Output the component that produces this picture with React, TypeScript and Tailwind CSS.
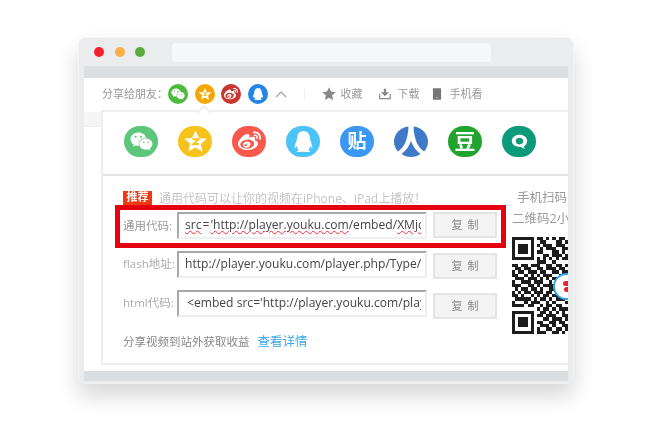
import { FaQq, FaWeibo, FaWeixin } from "react-icons/fa";
import { RiDownload2Fill, RiSmartphoneFill, RiStarFill } from "react-icons/ri";

const qrRows = [
  "111111101101010110",
  "100000100110001101",
  "101110101011101110",
  "101110100101110011",
  "101110101100011010",
  "100000100011011101",
  "111111101010101011",
  "000000001110010000",
  "110110111001101101",
  "011011001101110110",
  "101101110110011011",
  "110010101011100110",
  "011101110101011101",
  "100111011100101110",
  "111001101011110011",
  "010110110100111101",
  "101011011101100110",
  "110100101011011011",
  "011111010110101110",
  "100010111001010001",
  "111101100101101100",
  "000000001011010111",
  "111111100110101010",
  "100000101101110011",
  "101110100011011101",
  "101110101100110110",
  "101110100111010011",
  "100000101001101101",
  "111111101110011010",
];

function StarIcon({ size }: { size: number }) {
  return (
    <svg width={size} height={size} viewBox="0 0 24 24" aria-hidden>
      <path
        d="M12 1.5l3.2 6.9 7.6.9-5.6 5.1 1.5 7.5L12 17.8l-6.7 3.6 1.5-7.5L1.200 9.300l7.600-.9z"
        fill="#fff"
      />
      <path d="M9 9.800h6l-5 4.600h5.400" fill="none" stroke="#f8c21c" strokeWidth="1.800" />
    </svg>
  );
}

function RenrenLogo() {
  return (
    <svg width="34" height="31" viewBox="0 0 34 31" aria-hidden>
      <path d="M14.500 0.500C6 1.500 0 8 0 15.500c0 4 1.500 7.500 4 10 6-4 10-12 10.500-25z" fill="#3f7ac8" />
      <path d="M19.500 0.500C28 1.500 34 8 34 15.500c0 4-1.500 7.500-4 10-6-4-10-12-10.500-25z" fill="#3f7ac8" />
      <path d="M17 15c1.800 5 4.500 9 9.500 13-2.600 1.900-6 3-9.500 3s-6.900-1.100-9.500-3c5-4 7.700-8 9.500-13z" fill="#3f7ac8" />
    </svg>
  );
}

function Big({ className, children }: { className: string; children: React.ReactNode }) {
  return (
    <div className={`flex h-[31px] w-[34px] items-center justify-center rounded-full text-white ${className}`}>
      {children}
    </div>
  );
}

function Small({ className, children }: { className: string; children: React.ReactNode }) {
  return (
    <div className={`flex h-5 w-5 items-center justify-center rounded-full text-white ${className}`}>
      {children}
    </div>
  );
}

function CopyButton({ className }: { className: string }) {
  return (
    <div className={`flex h-[26px] w-16 items-center justify-center gap-[5px] border-2 border-[#e4e4e4] bg-[#f3f3f3] text-[11px] text-[#888] ${className}`}>
      <span>复</span>
      <span>制</span>
    </div>
  );
}

function CodeInput({ children }: { children: React.ReactNode }) {
  return (
    <div className="flex h-[27px] w-[250px] items-center overflow-hidden whitespace-nowrap border-2 border-t-[#a8a8a8] border-l-[#a8a8a8] border-r-[#eeeeee] border-b-[#eeeeee] bg-white pl-1.5 pr-1 text-[12.100px] text-[#444]">
      <div className="w-[238px] overflow-hidden">{children}</div>
    </div>
  );
}

function QrCode() {
  return (
    <div className="relative mt-[11px] h-[97px] w-14 overflow-hidden">
      <svg width="56" height="97" viewBox="0 0 18 29" preserveAspectRatio="none" shapeRendering="crispEdges" aria-hidden>
        {qrRows.map((row, y) =>
          row.split("").map((c, x) =>
            c === "1" ? <rect key={`${x}-${y}`} x={x} y={y} width="1" height="1" fill="#1d1d1d" /> : null,
          ),
        )}
      </svg>
      <div className="absolute left-[41px] top-[36px] flex h-[27px] w-[27px] flex-col items-center justify-center gap-px rounded-full border-2 border-[#2ea7f0] bg-white">
        <div className="ml-1 h-[5px] w-3 rounded-full bg-[#e8232c]" />
        <div className="ml-1 h-[5px] w-2.5 rounded-full bg-[#e8232c]" />
      </div>
    </div>
  );
}

export default function App() {
  return (
    <div className="h-[430px] w-[660px] overflow-hidden bg-white pl-[78px] pt-[37px] font-['Open_Sans','Noto_Sans_CJK_SC',sans-serif] blur-[0.5px]">
      <div className="flex h-[347px] w-[496px] flex-col rounded-lg border border-[#f4f4f5] bg-[#ebecee] px-[5px] pb-[2px] shadow-[0_12px_22px_rgba(0,0,0,0.16)]">
        {/* title bar */}
        <div className="flex h-7 shrink-0 items-center">
          <div className="ml-[10px] h-2.5 w-2.5 rounded-full bg-[#f5222d]" />
          <div className="ml-[11px] h-2.5 w-2.5 rounded-full bg-[#f7b04a]" />
          <div className="ml-[10px] h-2.5 w-2.5 rounded-full bg-[#5ca93e]" />
          <div className="ml-[27px] h-[19px] w-[319px] rounded-sm bg-[#f6f7f8]" />
        </div>

        <div className="flex flex-1 flex-col bg-[#dcdfe2] pb-[10px] pt-3">
          <div className="flex flex-1 flex-col bg-white">
            {/* share row */}
            <div className="flex h-8 shrink-0 items-center pl-[18px] text-[11px] text-[#999]">
              <span className="w-[66px] whitespace-nowrap">分享给朋友：</span>
              <div className="flex items-center gap-[6.500px]">
                <Small className="bg-[#4cba3a]"><FaWeixin size={14} /></Small>
                <Small className="bg-[#f9a602]"><StarIcon size={14} /></Small>
                <Small className="bg-[#c9352f]"><FaWeibo size={14} /></Small>
                <Small className="bg-[#2186e6]"><FaQq size={12} /></Small>
              </div>
              <svg className="ml-[7px]" width="12" height="8" viewBox="0 0 12 8" aria-hidden>
                <path d="M1 7l5-5 5 5" fill="none" stroke="#aaa" strokeWidth="1.400" />
              </svg>
              <div className="ml-[17px] h-[11px] w-px bg-[#eee]" />
              <RiStarFill className="ml-[17px] text-[#888]" size={14} />
              <span className="ml-[5px]">收藏</span>
              <RiDownload2Fill className="ml-[15px] text-[#888]" size={14} />
              <span className="ml-[6px]">下载</span>
              <RiSmartphoneFill className="ml-[10px] text-[#777]" size={14} />
              <span className="ml-[6px]">手机看</span>
            </div>

            <div className="relative flex flex-1">
              {/* notch pointing at the selected icon */}
              <div className="absolute left-[115px] top-[-3px] z-10 h-2.5 w-2.5 rotate-45 border-l-2 border-t-2 border-[#eeeeee] bg-white" />

              {/* left strip */}
              <div className="w-[17px] shrink-0 pt-0.5">
                <div className="h-[15px] border-b border-[#eee] bg-[#f5f5f5]" />
              </div>

              <div className="flex flex-1 flex-col overflow-hidden border-b-2 border-l-2 border-t-2 border-[#eeeeee]">
                <div className="flex h-[64px] shrink-0 items-center gap-5 border-b-2 border-[#e4e4e4] pb-[3px] pl-[21px]">
                  <Big className="bg-[#5bc67c]"><FaWeixin size={23} /></Big>
                  <Big className="bg-[#f8c21c]"><StarIcon size={25} /></Big>
                  <Big className="bg-[#f9584d]"><FaWeibo size={23} /></Big>
                  <Big className="bg-[#4bc3f7]"><FaQq size={21} /></Big>
                  <Big className="bg-[#3a97f3] text-[19px] font-bold">贴</Big>
                  <RenrenLogo />
                  <Big className="bg-[#22a32d] text-[21px] font-bold">豆</Big>
                  <Big className="bg-[#0b9b7b]">
                    <svg width="17" height="15" viewBox="0 0 20 18" preserveAspectRatio="none" aria-hidden>
                      <path d="M10 1c5 0 9 3 9 7.500 0 3-2 5-4 6.500l1.500 3-5-2.500C5 15.500 1 13 1 8.500 1 4 5 1 10 1zm0 3.500c-2.700 0-4.500 1.700-4.500 4s1.800 4 4.500 4 4.500-1.700 4.500-4-1.800-4-4.500-4z" fill="#fff" fillRule="evenodd" />
                    </svg>
                  </Big>
                </div>

                <div className="flex pt-[14px]">
                  <div className="ml-3 w-[391px] shrink-0">
                    <div className="flex h-[15px] items-center pl-2">
                      <span className="flex h-[14px] w-[29px] items-center justify-center bg-[#f23a12] text-[11px] font-bold text-white">推荐</span>
                      <span className="ml-[7px] whitespace-nowrap pt-0.5 text-[12px] text-[#c4c4c4]">通用代码可以让你的视频在iPhone、iPad上播放！</span>
                    </div>

                    <div className="flex h-[43px] items-start border-[5px] border-[#e60012] pl-[3px] pt-[2px]">
                      <span className="w-[54px] pt-[5px] text-[11.500px] text-[#999]">通用代码:</span>
                      <CodeInput>
                        <span className="underline decoration-red-500 decoration-wavy decoration-1">src</span><span className="mx-px">=</span><span className="underline decoration-red-500 decoration-wavy decoration-1">'http://player.youku.com</span>/embed/<span className="underline decoration-red-500 decoration-wavy decoration-1">XMjc</span>
                      </CodeInput>
                      <CopyButton className="ml-[6px]" />
                    </div>

                    <div className="mt-[3px] flex items-start pl-2">
                      <span className="w-[54px] whitespace-nowrap pt-1 text-[11.500px] text-[#aaa]">flash地址:</span>
                      <CodeInput>http://player.youku.com/player.php/Type/Folder</CodeInput>
                      <CopyButton className="ml-[6px] mt-0.5" />
                    </div>

                    <div className="mt-[11px] flex items-start pl-2">
                      <span className="w-[54px] whitespace-nowrap pt-1 text-[11.500px] text-[#aaa]">html代码:</span>
                      <CodeInput><span className="ml-0.5">&lt;embed src='http://player.youku.com/player.php</span></CodeInput>
                      <CopyButton className="ml-[6px] mt-[3px]" />
                    </div>

                    <div className="mt-[14px] whitespace-nowrap pl-2 text-[11.500px] text-[#888]">
                      分享视频到站外获取收益
                      <span className="ml-2 text-[12.500px] text-[#3ba8f0]">查看详情</span>
                    </div>
                  </div>

                  {/* phone column, cut off by the panel edge */}
                  <div className="w-[62px] shrink-0 overflow-hidden whitespace-nowrap pl-1.5 text-[12.500px] text-[#999]">
                    <div className="pl-[5px] leading-[15px]">手机扫码分享</div>
                    <div className="mt-[6px] leading-[15px]">二维码2小时有效</div>
                    <QrCode />
                  </div>
                </div>
              </div>
            </div>
            <div className="h-1.5 shrink-0" />
          </div>
        </div>
      </div>
    </div>
  );
}
